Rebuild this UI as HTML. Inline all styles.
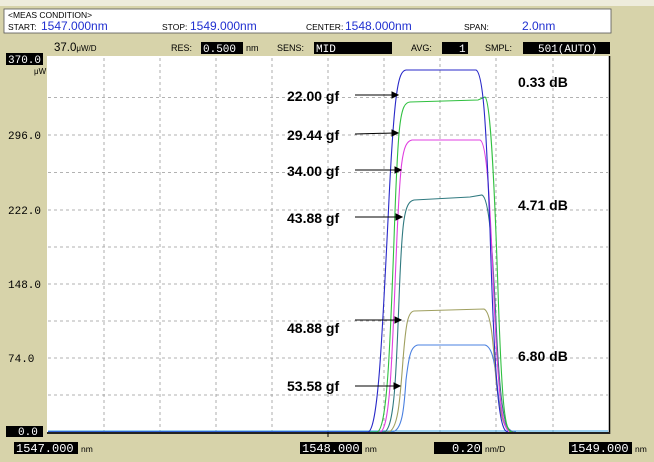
<!DOCTYPE html>
<html><head><style>
html,body{margin:0;padding:0;background:#d7d3aa;}
svg{display:block}
.m{font-family:"Liberation Mono",monospace;}
.s{font-family:"Liberation Sans",sans-serif;}
</style></head><body>
<svg width="654" height="462" viewBox="0 0 654 462" xmlns="http://www.w3.org/2000/svg">
<rect width="654" height="462" fill="#d7d3aa"/>
<rect width="654" height="6" fill="#eeecdc"/>
<!-- header -->
<rect x="4" y="9" width="607" height="24" fill="#fff" stroke="#555" stroke-width="0.8"/>
<g class="s" font-size="8.5" fill="#000">
<text x="8" y="18">&lt;MEAS CONDITION&gt;</text>
<text x="8" y="30">START:</text>
<text x="162" y="30">STOP:</text>
<text x="306" y="30">CENTER:</text>
<text x="464" y="30">SPAN:</text>
</g>
<g class="s" font-size="12" fill="#2030d0">
<text x="41" y="30">1547.000nm</text>
<text x="190" y="30">1549.000nm</text>
<text x="345" y="30">1548.000nm</text>
<text x="522" y="30">2.0nm</text>
</g>
<!-- row 2 -->
<text x="54" y="51" class="s" font-size="11.5" fill="#000">37.0<tspan font-size="8">μW/D</tspan></text>
<g class="s" font-size="9" fill="#000">
<text x="171" y="51">RES:</text>
<text x="246" y="51">nm</text>
<text x="277" y="51">SENS:</text>
<text x="411" y="51">AVG:</text>
<text x="485" y="51">SMPL:</text>
<text x="34" y="74" font-size="8">μW</text>
<text x="50" y="66" font-size="8.5">REF</text>
</g>
<rect x="201" y="42" width="42" height="12" fill="#000"/>
<rect x="314" y="42" width="78" height="12" fill="#000"/>
<rect x="442" y="42" width="26" height="12" fill="#000"/>
<rect x="523" y="42" width="87" height="12" fill="#000"/>
<g class="m" font-size="11" fill="#fff">
<text x="203" y="52">0.500</text>
<text x="316" y="52">MID</text>
<text x="459" y="52">1</text>
<text x="538" y="52">501(AUTO)</text>
</g>
<!-- plot -->
<rect x="47" y="56" width="562" height="377" fill="#fff"/>
<line x1="609.5" y1="56" x2="609.5" y2="434" stroke="#000" stroke-width="1.5"/>
<g stroke="#999" stroke-width="0.8" stroke-dasharray="3,3">
<line x1="104" y1="58" x2="104" y2="432"/><line x1="160" y1="58" x2="160" y2="432"/>
<line x1="216" y1="58" x2="216" y2="432"/><line x1="272" y1="58" x2="272" y2="432"/>
<line x1="328" y1="58" x2="328" y2="432"/><line x1="384" y1="58" x2="384" y2="432"/>
<line x1="440" y1="58" x2="440" y2="432"/><line x1="496" y1="58" x2="496" y2="432"/>
<line x1="553" y1="58" x2="553" y2="432"/>
<line x1="48" y1="97.5" x2="608" y2="97.5"/><line x1="48" y1="135" x2="608" y2="135"/>
<line x1="48" y1="172.5" x2="608" y2="172.5"/><line x1="48" y1="210" x2="608" y2="210"/>
<line x1="48" y1="247" x2="608" y2="247"/><line x1="48" y1="284" x2="608" y2="284"/>
<line x1="48" y1="321" x2="608" y2="321"/><line x1="48" y1="358" x2="608" y2="358"/>
<line x1="48" y1="395" x2="608" y2="395"/>
</g>
<!-- y labels -->
<rect x="6" y="53" width="37" height="12" fill="#000"/>
<g class="m" font-size="11" fill="#000">
<text x="8" y="63" fill="#fff">370.0</text>
<text x="8" y="139">296.0</text>
<text x="8" y="214">222.0</text>
<text x="8" y="288">148.0</text>
<text x="8" y="362">74.0</text>
</g>
<rect x="6" y="426" width="37" height="11" fill="#000"/>
<text x="18" y="435" class="m" font-size="11" fill="#fff">0.0</text>
<!-- traces -->
<g fill="none" stroke-width="1.1">
<path stroke="#3aa0e0" d="M48 431 L608 431"/>
<path stroke="#4a80e0" d="M48 432 L392 432 C402 431 404 410 406 380 C409 355 411 346 418 345 L485 345 C493 347 495 365 498 392 C502 425 508 432 516 432"/>
<path stroke="#a0a060" d="M48 432 L388 432 C398 431 400 400 403 360 C406 322 408 312 414 311 L484 309 C491 312 493 340 496 380 C501 425 506 432 514 432"/>
<path stroke="#307a80" d="M48 432 L384 432 C394 430 396 380 399 300 C402 220 404 202 414 200 L470 197 L482 195 C489 198 492 240 496 320 C500 410 505 432 513 432"/>
<path stroke="#e040e0" d="M48 432 L380 432 C390 430 392 360 396 260 C400 160 402 142 412 140 L480 140 C487 142 490 200 494 300 C499 410 503 432 511 432"/>
<path stroke="#30c040" d="M48 432 L377 432 C387 430 390 350 394 240 C398 120 400 103 410 102 L478 100 L485 97 C490 100 494 170 498 290 C502 410 505 432 512 432"/>
<path stroke="#2828c8" d="M48 432 L368 432 C378 430 382 340 388 220 C394 90 398 71 406 70 L476 70 C483 73 486 120 490 230 C495 400 500 432 508 432"/>
</g>
<rect x="47" y="432" width="563" height="2" fill="#222"/>
<line x1="328" y1="432" x2="328" y2="437" stroke="#000"/>
<!-- annotations -->
<g class="s" font-size="14" font-weight="bold" fill="#000">
<text x="287" y="101">22.00 gf</text>
<text x="287" y="140">29.44 gf</text>
<text x="287" y="176">34.00 gf</text>
<text x="287" y="223">43.88 gf</text>
<text x="287" y="333">48.88 gf</text>
<text x="287" y="391">53.58 gf</text>
<text x="518" y="87">0.33 dB</text>
<text x="518" y="210">4.71 dB</text>
<text x="518" y="361">6.80 dB</text>
</g>
<g stroke="#000" stroke-width="1" fill="#000">
<line x1="355" y1="95" x2="394" y2="95"/><path d="M398 95 l-6 -3 v6z"/>
<line x1="355" y1="134" x2="394" y2="133"/><path d="M398 133 l-6 -3 v6z"/>
<line x1="355" y1="170" x2="397" y2="170"/><path d="M401 170 l-6 -3 v6z"/>
<line x1="355" y1="217" x2="398" y2="217"/><path d="M402 217 l-6 -3 v6z"/>
<line x1="355" y1="320" x2="397" y2="320"/><path d="M401 320 l-6 -3 v6z"/>
<line x1="355" y1="386" x2="396" y2="386"/><path d="M400 386 l-6 -3 v6z"/>
</g>
<!-- bottom labels -->
<rect x="14" y="442" width="64" height="12" fill="#000"/>
<rect x="300" y="442" width="62" height="12" fill="#000"/>
<rect x="434" y="442" width="48" height="12" fill="#000"/>
<rect x="569" y="442" width="63" height="12" fill="#000"/>
<g class="m" font-size="12" fill="#fff">
<text x="16" y="452">1547.000</text>
<text x="302" y="452">1548.000</text>
<text x="452" y="452">0.20</text>
<text x="571" y="452">1549.000</text>
</g>
<g class="s" font-size="8.5" fill="#000">
<text x="81" y="452">nm</text>
<text x="365" y="452">nm</text>
<text x="485" y="452">nm/D</text>
<text x="635" y="452">nm</text>
</g>
</svg>
</body></html>
